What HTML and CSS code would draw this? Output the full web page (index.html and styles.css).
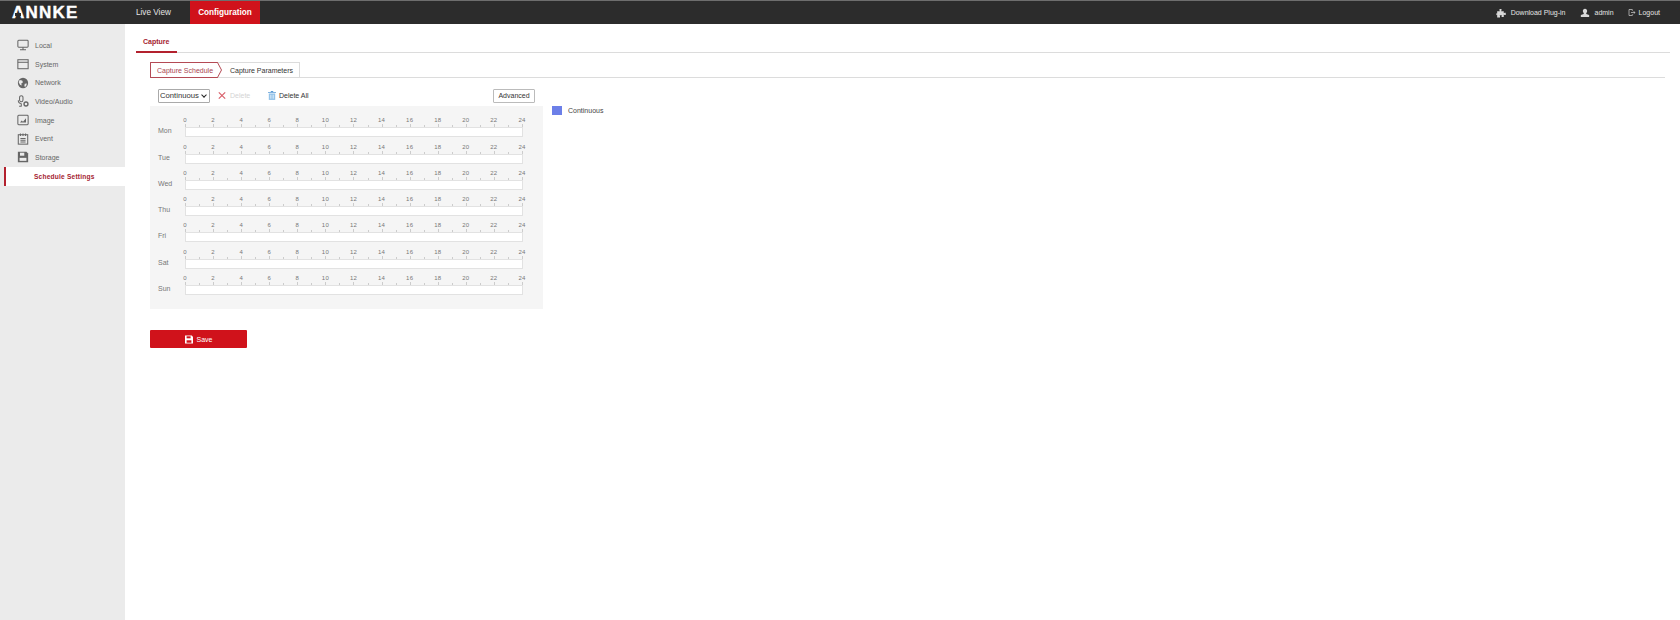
FILE: index.html
```
<!DOCTYPE html>
<html lang="en">
<head>
<meta charset="utf-8">
<title>Capture Schedule</title>
<link rel="stylesheet" href="styles.css">
</head>
<body>
<header class="topbar">
  <div class="logo"><span class="logo-a">A</span>NNKE</div>
  <nav class="mainnav">
    <a class="mainnav-item">Live View</a>
    <a class="mainnav-item is-active">Configuration</a>
  </nav>
  <div class="userbar">
    <span class="userbar-item"><svg class="ub-icon" viewBox="0 0 12 12"><path d="M4.2 1.2h2.4v1.6l-.5 1h3.2v2.4l1-.5h1.400v2.600h-1.400l-1-.5v3H6.400l.5-1V8.600H4.300l.5 1v1.800H1.400V8.200l-1 .5V6.200l1 .4V3.800h3.200l-.4-1z" fill="#d8d8d8"/></svg>Download Plug-in</span>
    <span class="userbar-item"><svg class="ub-icon" viewBox="0 0 12 12"><path d="M6 .8c1.700 0 2.600 1.200 2.600 2.800 0 1.100-.5 2-1.100 2.500v1l3.500 1.400v2.400H1V8.500l3.500-1.400v-1C3.900 5.600 3.400 4.700 3.400 3.600 3.400 2 4.300.8 6 .8z" fill="#d8d8d8"/></svg>admin</span>
    <span class="userbar-item userbar-logout"><svg class="ub-icon" viewBox="0 0 12 12" fill="none" stroke="#d8d8d8"><path d="M6.500 3.500v-2h-5v9h5v-2"/><path d="M4.500 6h6M8.500 4l2 2-2 2"/></svg>Logout</span>
  </div>
</header>
<div class="layout">
  <aside class="sidebar">
    <a class="side-item"><svg class="side-icon" viewBox="0 0 14 14" fill="none" stroke="#666" stroke-width="1.200"><rect x="1" y="1.500" width="12" height="8" rx="1"/><path d="M7 9.500v2.500M3.500 12.500h7"/></svg>Local</a>
    <a class="side-item"><svg class="side-icon" viewBox="0 0 14 14" fill="none" stroke="#666" stroke-width="1.200"><rect x="1" y="2" width="12" height="10.500"/><path d="M1 5h12"/></svg>System</a>
    <a class="side-item"><svg class="side-icon" viewBox="0 0 14 14"><circle cx="7" cy="7" r="6" fill="#666"/><path d="M3 3.500l3 .5 1 2-2 1.500.5 2.500-2-1-1.500-3zM9 8l2.500-.5L10.500 11 8.500 11z" fill="#ebebeb"/></svg>Network</a>
    <a class="side-item"><svg class="side-icon" viewBox="0 0 14 14" fill="none" stroke="#666" stroke-width="1.200"><rect x="3" y=".8" width="4" height="7" rx="2"/><path d="M1.500 6c0 2.500 1.500 3.800 3.500 3.800M5 9.800v3M2.500 13h3"/><circle cx="10.500" cy="10.500" r="2.300" stroke-width="1.600"/></svg>Video/Audio</a>
    <a class="side-item"><svg class="side-icon" viewBox="0 0 14 14" fill="none" stroke="#666" stroke-width="1.200"><rect x="1" y="1.500" width="12" height="11" rx="1"/><path d="M3.500 10l2-2.500 1.500 1.500L10.500 5v5z" fill="#666" stroke="none"/></svg>Image</a>
    <a class="side-item"><svg class="side-icon" viewBox="0 0 14 14" fill="none" stroke="#666" stroke-width="1.200"><rect x="1.500" y="2" width="11" height="11"/><path d="M4 .5v3M7 .5v3M10 .5v3M4 6.500h6M4 8.500h6M4 10.500h6"/></svg>Event</a>
    <a class="side-item"><svg class="side-icon" viewBox="0 0 14 14"><path d="M1 1h10l2 2v10H1z" fill="#666"/><rect x="3.500" y="2" width="5" height="3.500" fill="#ebebeb"/><rect x="3" y="8" width="8" height="3.500" fill="#ebebeb"/></svg>Storage</a>
    <a class="side-item is-active">Schedule Settings</a>
  </aside>
  <main class="content">
    <div class="tabbar"><span class="tab">Capture</span></div>
    <div class="steps">
      <span class="step is-active">Capture Schedule<svg class="step-arrow" viewBox="0 0 8 16" fill="none"><path d="M0 .5h.5L4.500 8 .5 15.500H0" fill="#fff" stroke="#b44a55"/></svg></span>
      <span class="step">Capture Parameters</span>
    </div>
    <div class="schedule">
      <div class="schedule-main">
        <div class="toolbar">
          <span class="select-wrap"><select class="type-select"><option>Continuous</option></select></span>
          <span class="tool is-disabled"><svg class="tool-icon" viewBox="0 0 10 10" fill="none" stroke="#d9606b" stroke-width="1.500"><path d="M1 1l8 8M9 1l-8 8"/></svg>Delete</span>
          <span class="tool tool-all"><svg class="tool-icon" viewBox="0 0 10 11"><path d="M3.500 0h3v1H10v1.200H0V1h3.500z" fill="#5b9bd5"/><path d="M1 3h8v8H1z" fill="#8fc0e8"/><path d="M3 4.500v5M5 4.500v5M7 4.500v5" stroke="#fff" stroke-width=".7"/></svg>Delete All</span>
          <button class="advanced" type="button">Advanced</button>
        </div>
        <div class="grid">
          <div class="day"><span class="day-name">Mon</span><div class="track"><div class="hours"><span>0</span><span>2</span><span>4</span><span>6</span><span>8</span><span>10</span><span>12</span><span>14</span><span>16</span><span>18</span><span>20</span><span>22</span><span>24</span></div><div class="ticks"></div><div class="bar"></div></div></div>
          <div class="day"><span class="day-name">Tue</span><div class="track"><div class="hours"><span>0</span><span>2</span><span>4</span><span>6</span><span>8</span><span>10</span><span>12</span><span>14</span><span>16</span><span>18</span><span>20</span><span>22</span><span>24</span></div><div class="ticks"></div><div class="bar"></div></div></div>
          <div class="day"><span class="day-name">Wed</span><div class="track"><div class="hours"><span>0</span><span>2</span><span>4</span><span>6</span><span>8</span><span>10</span><span>12</span><span>14</span><span>16</span><span>18</span><span>20</span><span>22</span><span>24</span></div><div class="ticks"></div><div class="bar"></div></div></div>
          <div class="day"><span class="day-name">Thu</span><div class="track"><div class="hours"><span>0</span><span>2</span><span>4</span><span>6</span><span>8</span><span>10</span><span>12</span><span>14</span><span>16</span><span>18</span><span>20</span><span>22</span><span>24</span></div><div class="ticks"></div><div class="bar"></div></div></div>
          <div class="day"><span class="day-name">Fri</span><div class="track"><div class="hours"><span>0</span><span>2</span><span>4</span><span>6</span><span>8</span><span>10</span><span>12</span><span>14</span><span>16</span><span>18</span><span>20</span><span>22</span><span>24</span></div><div class="ticks"></div><div class="bar"></div></div></div>
          <div class="day"><span class="day-name">Sat</span><div class="track"><div class="hours"><span>0</span><span>2</span><span>4</span><span>6</span><span>8</span><span>10</span><span>12</span><span>14</span><span>16</span><span>18</span><span>20</span><span>22</span><span>24</span></div><div class="ticks"></div><div class="bar"></div></div></div>
          <div class="day"><span class="day-name">Sun</span><div class="track"><div class="hours"><span>0</span><span>2</span><span>4</span><span>6</span><span>8</span><span>10</span><span>12</span><span>14</span><span>16</span><span>18</span><span>20</span><span>22</span><span>24</span></div><div class="ticks"></div><div class="bar"></div></div></div>
        </div>
      </div>
      <div class="legend"><span class="swatch"></span>Continuous</div>
    </div>
    <button class="save" type="button"><svg class="save-icon" viewBox="0 0 10 10"><path d="M0 0h8.500L10 1.500V10H0z" fill="#fff"/><rect x="2" y="1" width="5" height="2.500" fill="#d0121b"/><rect x="2" y="6" width="6" height="3" fill="#d0121b"/></svg>Save</button>
  </main>
</div>
</body>
</html>
```
FILE: styles.css
```
* { box-sizing: border-box; }
html, body { margin: 0; height: 100%; }
body {
  font-family: "Liberation Sans", Arial, sans-serif;
  font-size: 7px;
  color: #444;
  background: #fff;
  overflow: hidden;
}
.topbar {
  height: 24px;
  display: flex;
  align-items: stretch;
  background: #2c2c2c;
  border-top: 1px solid #6e6e6e;
  color: #e4e4e4;
}
.logo {
  width: 136px;
  padding-left: 12px;
  font-size: 17px;
  line-height: 23px;
  font-weight: 700;
  letter-spacing: 1.200px;
  color: #fff;
  -webkit-text-stroke: 0.4px #fff;
}
.logo-a { position: relative; display: inline-block; }
.logo-a::after {
  content: "";
  position: absolute;
  left: 3px;
  right: 4px;
  top: 12px;
  height: 3px;
  background: #2c2c2c;
}
.mainnav { display: flex; }
.mainnav-item {
  width: 54px;
  font-size: 8.200px;
  line-height: 23px;
}
.mainnav-item.is-active {
  width: 70px;
  text-align: center;
  font-weight: 700;
  color: #fff;
  background: #d0121b;
}
.userbar {
  margin-left: auto;
  padding-right: 20px;
  display: flex;
  align-items: center;
  gap: 14px;
}
.userbar-item { display: flex; align-items: center; gap: 5px; font-size: 7px; }
.ub-icon { width: 10px; height: 10px; }
.userbar-logout { gap: 3px; }
.userbar-logout .ub-icon { width: 8px; height: 9px; }
.layout { display: flex; height: 596px; }
.sidebar {
  width: 125px;
  flex: none;
  background: #ebebeb;
  padding-top: 12px;
}
.side-item {
  height: 18.700px;
  display: flex;
  align-items: center;
  padding-left: 17px;
  gap: 6px;
  color: #666;
  font-size: 7px;
}
.side-icon { width: 12px; height: 12px; flex: none; }
.side-item.is-active {
  margin-left: 4px;
  padding-left: 28px;
  background: #fff;
  border-left: 2px solid #b3212e;
  color: #a5232f;
  font-weight: 700;
  font-size: 6.600px;
  letter-spacing: 0.200px;
}
.content { flex: 1; padding: 0 10px 0 11px; }
.tabbar {
  height: 29px;
  border-bottom: 1px solid #dcdcdc;
  display: flex;
  align-items: flex-end;
}
.tab {
  width: 41px;
  height: 29px;
  padding: 14px 0 0 7px;
  margin-bottom: -1px;
  border-bottom: 2px solid #b3212e;
  color: #a5232f;
  font-size: 7px;
  font-weight: 700;
}
.steps {
  margin: 9px 5px 0 14px;
  height: 16px;
  display: flex;
  border-bottom: 1px solid #dcdcdc;
}
.step {
  height: 16px;
  display: flex;
  align-items: center;
  font-size: 7px;
  color: #333;
  border: 1px solid #dcdcdc;
  border-left: 0;
}
.step.is-active {
  position: relative;
  width: 68px;
  padding-left: 6px;
  color: #a94450;
  border: 1px solid #b44a55;
  border-right: 0;
  border-radius: 1px 0 0 1px;
}
.step-arrow {
  position: absolute;
  right: -7px;
  top: -1px;
  width: 8px;
  height: 16px;
}
.step.is-active + .step { padding-left: 12px; width: 82px; }
.schedule { display: flex; margin: 10px 0 0 14px; }
.schedule-main { width: 393px; }
.toolbar {
  height: 15px;
  margin-bottom: 3px;
  padding: 0 8px;
  display: flex;
  align-items: center;
}
.select-wrap { position: relative; display: block; width: 52px; height: 14px; }
.select-wrap::after {
  content: "";
  position: absolute;
  right: 4px;
  top: 4px;
  width: 3px;
  height: 3px;
  border: solid #222;
  border-width: 0 1px 1px 0;
  transform: rotate(45deg);
  pointer-events: none;
}
.type-select {
  appearance: none;
  display: block;
  width: 52px;
  height: 14px;
  padding: 0 0 0 1px;
  font-family: "Liberation Sans", Arial, sans-serif;
  font-size: 7.700px;
  color: #333;
  background: #fff;
  border: 1px solid #aaa;
  border-radius: 1px;
}
.tool { display: flex; align-items: center; gap: 4px; color: #333; font-size: 7px; }
.tool.is-disabled { margin-left: 8px; color: #d4d4d4; width: 50px; }
.tool-all { gap: 3px; }
.tool-icon { width: 8px; height: 9px; flex: none; }
.advanced {
  margin-left: auto;
  width: 42px;
  height: 14px;
  padding: 0;
  background: #fff;
  border: 1px solid #bbb;
  border-radius: 1px;
  font-family: inherit;
  font-size: 7px;
  color: #333;
}
.grid {
  height: 203px;
  background: #f5f5f5;
  padding: 5px 20px 0 8px;
}
.day {
  height: 26.250px;
  display: flex;
  align-items: flex-end;
}
.day-name {
  width: 27px;
  flex: none;
  line-height: 12px;
  color: #777;
  font-size: 7px;
}
.track { width: 338px; flex: none; }
.hours {
  height: 12px;
  padding-top: 4px;
  margin-right: 1px;
  display: flex;
  justify-content: space-between;
  font-size: 6px;
  line-height: 8px;
  letter-spacing: 0.200px;
  color: #777;
}
.hours span { width: 0; display: flex; justify-content: center; }
.ticks {
  height: 3px;
  background:
    repeating-linear-gradient(to right, #ccc 0 1px, transparent 1px 14.040px) 0 100% / 100% 2px no-repeat,
    repeating-linear-gradient(to right, #ccc 0 1px, transparent 1px 28.080px) 0 100% / 100% 3px no-repeat;
}
.bar {
  height: 10px;
  background: #fff;
  border: 1px solid #e2e2e2;
}
.legend {
  margin: 18px 0 0 9px;
  height: 9px;
  display: flex;
  align-items: center;
  gap: 6px;
  color: #444;
}
.swatch { width: 10px; height: 9px; background: #6c7fe8; }
.save {
  margin: 21px 0 0 14px;
  width: 97px;
  height: 18px;
  display: flex;
  align-items: center;
  justify-content: center;
  gap: 4px;
  border: 0;
  border-radius: 1px;
  background: #d0121b;
  color: #fff;
  font-family: inherit;
  font-size: 7px;
}
.save-icon { width: 8px; height: 9px; }
```
